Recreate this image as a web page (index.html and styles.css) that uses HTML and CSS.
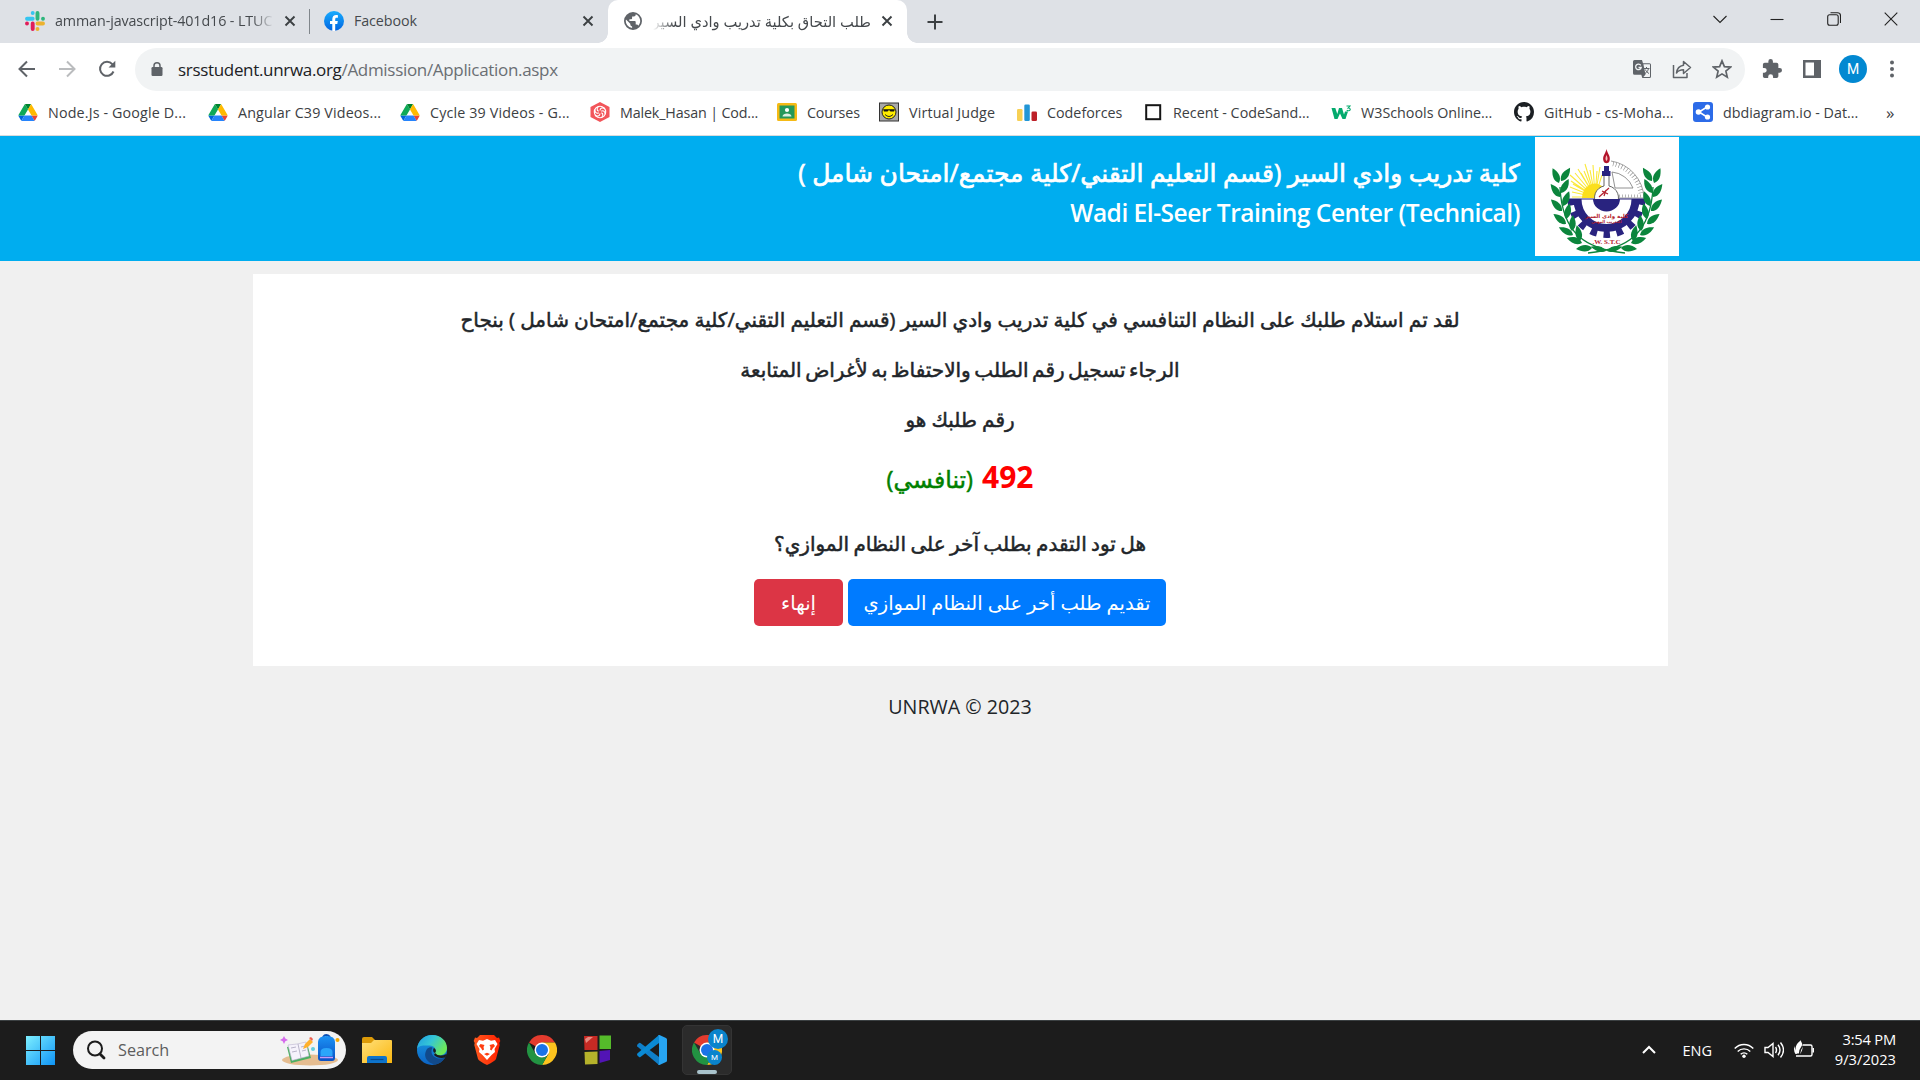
FILE: index.html
```html
<!DOCTYPE html>
<html lang="en">
<head>
<meta charset="utf-8">
<title>طلب التحاق بكلية تدريب وادي السير</title>
<link rel="stylesheet" href="styles.css">
</head>
<body>
<svg class="defs" width="0" height="0" aria-hidden="true">
  <defs>
    <linearGradient id="fb" x1="0" y1="0" x2="0" y2="1"><stop offset="0" stop-color="#18acfe"/><stop offset="1" stop-color="#0163e0"/></linearGradient>
    <linearGradient id="win" x1="0" y1="0" x2="1" y2="1"><stop offset="0" stop-color="#7defff"/><stop offset="1" stop-color="#0f94f5"/></linearGradient>
    <linearGradient id="fold" x1="0" y1="0" x2="1" y2="1"><stop offset="0" stop-color="#ffe07a"/><stop offset="1" stop-color="#fbb710"/></linearGradient>
    <linearGradient id="edgeTop" x1="0" y1="0" x2="1" y2=".5"><stop offset="0" stop-color="#1e9be2"/><stop offset=".5" stop-color="#35c6d6"/><stop offset="1" stop-color="#6ce85a"/></linearGradient>
    <linearGradient id="edgeLow" x1="0" y1="0" x2="0" y2="1"><stop offset="0" stop-color="#1b9de2"/><stop offset="1" stop-color="#0b62c4"/></linearGradient>
    <linearGradient id="brave" x1="0" y1="0" x2="1" y2="0"><stop offset="0" stop-color="#ff5a1f"/><stop offset="1" stop-color="#ff2000"/></linearGradient>
    <linearGradient id="bag" x1="0" y1="0" x2="0" y2="1"><stop offset="0" stop-color="#1b93f5"/><stop offset="1" stop-color="#0a4fc4"/></linearGradient>
    <symbol id="drive" viewBox="0 0 87.3 78">
      <path fill="#0066da" d="m6.6 66.85 3.85 6.65c.8 1.4 1.95 2.5 3.3 3.3l13.75-23.8h-27.5c0 1.55.4 3.1 1.2 4.5z"/>
      <path fill="#0fa958" d="m43.65 25-13.75-23.8c-1.35.8-2.5 1.9-3.3 3.3l-25.4 44a9.06 9.06 0 0 0-1.2 4.5h27.5z"/>
      <path fill="#ea4335" d="m73.55 76.8c1.35-.8 2.5-1.9 3.3-3.3l1.6-2.75 7.65-13.25c.8-1.4 1.2-2.95 1.2-4.5h-27.5l5.85 11.5z"/>
      <path fill="#00832d" d="m43.65 25 13.75-23.8c-1.35-.8-2.9-1.2-4.5-1.2h-18.5c-1.6 0-3.15.45-4.5 1.2z"/>
      <path fill="#2684fc" d="m59.8 53h-32.3l-13.75 23.8c1.35.8 2.9 1.2 4.5 1.2h50.8c1.6 0 3.15-.45 4.5-1.2z"/>
      <path fill="#ffba00" d="m73.4 26.5-12.7-22c-.8-1.4-1.95-2.5-3.3-3.3l-13.75 23.8 16.15 28h27.45c0-1.55-.4-3.1-1.2-4.5z"/>
    </symbol>
    <symbol id="cross" viewBox="0 0 12 12"><path d="M1.500 1.500l9 9m0-9l-9 9" fill="none" stroke="#3c4043" stroke-width="1.900"/></symbol>
    <symbol id="chrome" viewBox="0 0 48 48">
      <path fill="#e33b2e" d="M24 24L3.200 12A24 24 0 0 1 44.800 12H24z"/>
      <path fill="#fcc31e" d="M24 12h20.800A24 24 0 0 1 24 48l10.400-18z"/>
      <path fill="#229342" d="M3.200 12L13.600 30 24 36l3.600 5L24 48A24 24 0 0 1 3.200 12z"/>
      <path fill="#229342" d="M13.600 30a12 12 0 0 0 20.800 0L24 48z"/>
      <circle cx="24" cy="24" r="12" fill="#fff"/><circle cx="24" cy="24" r="9.600" fill="#1a73e8"/>
    </symbol>
    <path id="leaf" d="M0 0C-5-4-4-10-1-16 3-11 5-5 0 0z"/>
    <g id="branch" fill="#0b853c">
      <path d="M90 116C50 112 27 96 25 50" fill="none" stroke="#0b853c" stroke-width="1.300"/>
      <use href="#leaf" transform="translate(26 44) rotate(38)"/>
      <use href="#leaf" transform="translate(24 46) rotate(-20)"/>
      <use href="#leaf" transform="translate(26 56) rotate(32)"/>
      <use href="#leaf" transform="translate(25 60) rotate(-32)"/>
      <use href="#leaf" transform="translate(28 69) rotate(26)"/>
      <use href="#leaf" transform="translate(27 74) rotate(-40)"/>
      <use href="#leaf" transform="translate(31 82) rotate(16)"/>
      <use href="#leaf" transform="translate(31 87) rotate(-48)"/>
      <use href="#leaf" transform="translate(37 94) rotate(6)"/>
      <use href="#leaf" transform="translate(38 98) rotate(-58)"/>
      <use href="#leaf" transform="translate(45 104) rotate(-8)"/>
      <use href="#leaf" transform="translate(47 106) rotate(-68)"/>
      <use href="#leaf" transform="translate(57 111) rotate(-90)"/>
      <use href="#leaf" transform="translate(71 114) rotate(-72) scale(.8 1)"/>
    </g>
  </defs>
</svg>

<div class="tabs">
  <div class="tab tab-slack">
    <svg class="fav" viewBox="0 0 20 20"><g stroke-width="3.900" stroke-linecap="round"><path d="M7.700 2v0M2 7.700h5.700" stroke="#36c5f0"/><path d="M12.500 2v5.700M18 7.700v0" stroke="#2eb67d"/><path d="M12.500 12.500H18M12.500 18v0" stroke="#ecb22e"/><path d="M7.700 12.500V18M2 12.500v0" stroke="#e01e5a"/></g></svg>
    <span class="tab-title fade-right">amman-javascript-401d16 - LTUC</span>
    <svg class="x"><use href="#cross"/></svg>
  </div>
  <div class="tab tab-fb">
    <svg class="fav" viewBox="0 0 20 20"><circle cx="10" cy="10" r="10" fill="url(#fb)"/><path fill="#fff" d="M8.300 20v-7H6V10h2.300V8.200C8.300 5.600 9.800 4 12.200 4c.8 0 1.700.2 1.700.2v2.500h-1.300c-1.100 0-1.400.7-1.400 1.400V10h2.600l-.5 3h-2.100v7z"/></svg>
    <span class="tab-title">Facebook</span>
    <svg class="x"><use href="#cross"/></svg>
  </div>
  <div class="tab tab-active">
    <svg class="globe" viewBox="2 2 20 20"><path fill="#5f6368" d="M12 2a10 10 0 1 0 0 20 10 10 0 0 0 0-20zm-1 17.900A8 8 0 0 1 4.200 10.200L9 15v1a2 2 0 0 0 2 2zm6.900-2.500A2 2 0 0 0 16 16h-1v-3a1 1 0 0 0-1-1H8v-2h2a1 1 0 0 0 1-1V7h2a2 2 0 0 0 2-2v-.4a8 8 0 0 1 2.900 12.800z"/></svg>
    <span class="tab-title fade-left" dir="rtl">طلب التحاق بكلية تدريب وادي السير</span>
    <svg class="x"><use href="#cross"/></svg>
  </div>
  <svg class="plus" viewBox="0 0 16 16"><path d="M8 .5v15M.5 8h15" stroke="#3c4043" stroke-width="2"/></svg>
  <div class="winctl">
    <svg viewBox="0 0 14 14"><path d="M.5 4l6.500 6.500L13.500 4"/></svg>
    <svg viewBox="0 0 14 14"><path d="M.5 7.500h13"/></svg>
    <svg viewBox="0 0 14 14"><rect x=".7" y="2.700" width="10.500" height="10.500" rx="2"/><path d="M3.500.7h7a3 3 0 0 1 3 3v7.300"/></svg>
    <svg viewBox="0 0 14 14"><path d="M.7.700l12.600 12.600m0-12.600L.7 13.300"/></svg>
  </div>
</div>

<div class="toolbar">
  <div class="nav">
    <svg viewBox="0 0 20 20"><path d="M18 10H3M10 2.500L2.500 10l7.500 7.500" stroke="#5f6368"/></svg>
    <svg viewBox="0 0 20 20"><path d="M2 10h15M10 2.500l7.500 7.500-7.500 7.500" stroke="#babcbe"/></svg>
    <svg viewBox="0 0 20 20"><path d="M16.500 12.500A7 7 0 1 1 15.300 5.200L17 7" stroke="#5f6368"/><path d="M18.300 1.800v6.700h-6.700z" fill="#5f6368"/></svg>
  </div>
  <div class="omnibox">
    <svg class="lock" viewBox="0 0 12 14"><rect x=".5" y="5" width="11" height="9" rx="1.200" fill="#5f6368"/><path d="M3 6V3.800a3 3 0 0 1 6 0V6" fill="none" stroke="#5f6368" stroke-width="1.500"/></svg>
    <span class="url">srsstudent.unrwa.org<span class="path">/Admission/Application.aspx</span></span>
    <div class="omni-icons">
      <svg viewBox="0 0 20 20"><path fill="#5f6368" d="M2.500 1H10l1 3.200h6.500A1.500 1.500 0 0 1 19 5.700v11.800a1.500 1.500 0 0 1-1.500 1.500H10.300l-1-3.200H2.500A1.500 1.500 0 0 1 1 14.300V2.500A1.500 1.500 0 0 1 2.500 1z"/><path fill="#f1f3f4" d="M11.400 5.200h6.200l.4.400v11.900l-.4.500h-6.200l2.100-2.500z"/><path d="M8.800 6.300A2.800 2.800 0 1 0 9.200 8.500H6.500" fill="none" stroke="#f1f3f4" stroke-width="1.300"/><path d="M11.800 9.500h5.700M14.500 8v1.500M16.500 9.500c-.5 2.500-2 4-3.500 5M13.300 10.500c.8 1.800 2.200 3.200 3.700 4" fill="none" stroke="#5f6368" stroke-width="1"/></svg>
      <svg viewBox="0 0 20 20"><path d="M1.500 6v12.500H15V14M11.500 2.500l7 6-7 6v-3.700c-3.500 0-5.500 1-7 3.200.5-4 2.500-7 7-7.700z" fill="none" stroke="#5f6368" stroke-width="1.500" stroke-linejoin="round"/></svg>
      <svg viewBox="0 0 20 20"><path d="M10 1.800l2.400 5.800 6.200.5-4.700 4 1.400 6.100-5.300-3.300-5.300 3.300 1.400-6.100-4.700-4 6.200-.5z" fill="none" stroke="#5f6368" stroke-width="1.700"/></svg>
    </div>
  </div>
  <div class="actions">
    <svg viewBox="1 1 22 22"><path fill="#5f6368" d="M20.500 11H19V7a2 2 0 0 0-2-2h-4V3.500a2.500 2.500 0 0 0-5 0V5H4a2 2 0 0 0-2 2v3.800h1.500a2.700 2.700 0 0 1 0 5.400H2V20a2 2 0 0 0 2 2h3.800v-1.500a2.700 2.700 0 0 1 5.400 0V22H17a2 2 0 0 0 2-2v-4h1.500a2.500 2.500 0 0 0 0-5z"/></svg>
    <svg viewBox="0 0 20 20"><path fill="#5f6368" fill-rule="evenodd" d="M1 1h18v18H1zM3.500 3.500v13H12v-13z"/></svg>
    <span class="avatar">M</span>
    <svg viewBox="0 0 20 20"><g fill="#5f6368"><circle cx="10" cy="3.500" r="2"/><circle cx="10" cy="10" r="2"/><circle cx="10" cy="16.500" r="2"/></g></svg>
  </div>
</div>

<div class="bookmarks">
  <div class="bm wide"><svg class="dr"><use href="#drive"/></svg><span>Node.Js - Google D...</span></div>
  <div class="bm wide"><svg class="dr"><use href="#drive"/></svg><span>Angular C39 Videos...</span></div>
  <div class="bm wide"><svg class="dr"><use href="#drive"/></svg><span>Cycle 39 Videos - G...</span></div>
  <div class="bm tight"><svg viewBox="0 0 20 20"><path d="M10 0l9.500 5v10L10 20 .5 15V5z" fill="#f2555a"/><g fill="none" stroke="#fff" stroke-width="1.100"><circle cx="10" cy="10" r="5.700"/><path d="M10 8.500c0-2.500 3-3.500 5-1.500M11.300 9.300c2-1.500 4.300.6 3.700 3.200M11.300 10.800c2.300.8 2 4-.5 5M10 11.500c0 2.500-3 3.500-5 1.500M8.700 10.700c-2 1.500-4.300-.6-3.700-3.200M8.700 9.200c-2.300-.8-2-4 .5-5"/></g></svg><span>Malek_Hasan | Cod...</span></div>
  <div class="bm tight"><svg viewBox="0 0 20 20"><rect y="1" width="20" height="18" rx="1.500" fill="#f5ba15"/><rect x="2.500" y="3.500" width="15" height="13" fill="#23985a"/><circle cx="10" cy="8" r="2.100" fill="#fff"/><path d="M5.500 14.500c0-4 9-4 9 0z" fill="#d9f0e2"/></svg><span>Courses</span></div>
  <div class="bm wide"><svg viewBox="0 0 20 20"><rect x=".5" y="1" width="19" height="18" fill="#a9a9a9" stroke="#333"/><circle cx="10" cy="10" r="7" fill="#ffed00" stroke="#222"/><path d="M4 7.200h12l-1 2.300h-3.500L10 8 8.500 9.500H5z" fill="#111"/><path d="M6 12.500q4 4 8 0" fill="none" stroke="#222"/></svg><span>Virtual Judge</span></div>
  <div class="bm"><svg viewBox="0 0 20 20"><rect y="7" width="5.500" height="12" rx="1.300" fill="#f7d054"/><rect x="7.300" y="2.500" width="5.500" height="16.500" rx="1.300" fill="#2196d6"/><rect x="14.500" y="9.500" width="5.500" height="9.500" rx="1.300" fill="#bd2028"/></svg><span>Codeforces</span></div>
  <div class="bm"><svg viewBox="0 0 20 20"><rect x="3.200" y="3.200" width="14" height="14" fill="#fff" stroke="#151515" stroke-width="2"/></svg><span>Recent - CodeSand...</span></div>
  <div class="bm"><svg viewBox="0 0 20 20"><path d="M.5 6h3.800L6.300 12 8 6h3l2 6.500L14 9.500h3L14.500 17h-3L9 11.500 6.500 17h-3z" fill="#04aa6d"/><path d="M15.500 4h3.500l-1.800 2c1.200-.2 2.200.5 2 1.600-.2 1.200-2 1.500-3.500.7" fill="none" stroke="#04aa6d" stroke-width="1.100"/></svg><span>W3Schools Online...</span></div>
  <div class="bm wide"><svg viewBox="0 0 16 16"><path fill="#1b1f23" d="M8 0C3.580 0 0 3.580 0 8c0 3.540 2.290 6.530 5.470 7.590.4.070.55-.17.55-.38 0-.19-.01-.82-.01-1.490-2.010.37-2.530-.49-2.690-.94-.09-.23-.48-.94-.82-1.130-.28-.15-.68-.52-.01-.53.63-.01 1.080.58 1.230.82.720 1.210 1.870.87 2.330.66.070-.52.280-.87.510-1.070-1.780-.2-3.640-.89-3.640-3.950 0-.87.310-1.590.82-2.150-.08-.2-.36-1.020.08-2.120 0 0 .67-.21 2.200.82.640-.18 1.320-.27 2-.27s1.360.09 2 .27c1.530-1.040 2.200-.82 2.200-.82.440 1.100.160 1.920.080 2.120.51.56.82 1.270.82 2.150 0 3.070-1.870 3.750-3.650 3.950.29.25.54.73.54 1.480 0 1.070-.01 1.930-.01 2.200 0 .21.150.46.55.38A8.010 8.010 0 0 0 16 8c0-4.420-3.580-8-8-8z"/></svg><span>GitHub - cs-Moha...</span></div>
  <div class="bm"><svg viewBox="0 0 20 20"><rect width="20" height="20" rx="3" fill="#2c6be8"/><path d="M14 5L6 10l8 5" fill="none" stroke="#fff" stroke-width="1.500"/><g fill="#fff"><circle cx="14.500" cy="5" r="2.600"/><circle cx="5.500" cy="10" r="2.800"/><circle cx="14.500" cy="15" r="2.600"/></g></svg><span>dbdiagram.io - Dat...</span></div>
  <div class="more">»</div>
</div>

<div class="page" dir="rtl">
  <header class="site-head">
    <svg class="emblem" viewBox="0 0 144 119">
      <rect width="144" height="119" fill="#fff"/>
      <g stroke="#fbe93a" stroke-width="1.100"><path d="M60 60L37 60M60 60L37 55M60 60L35 50M60 60L36 44M60 60L35 38M60 60L40 36M60 60L43 32M60 60L49 34M60 60L50 27M60 60L55 33M60 60L58 28M60 60L62 34M60 60L65 30M60 60L67 38M60 60L38 47M60 60L46 36"/></g>
      <path d="M47 61a13 15 0 0 1 20-12v12z" fill="#fbdf1c"/>
      <path d="M76 24a39 39 0 0 1 33 37H84" fill="#fff" stroke="#888" stroke-width=".8"/>
      <path d="M78 27a35 35 0 0 1 28 31" fill="none" stroke="#888" stroke-width="4.500" stroke-dasharray=".6 2.400"/>
      <path d="M77 35a25 25 0 0 1 21 16H80z" fill="none" stroke="#777" stroke-width=".8"/>
      <path d="M84 59h23" stroke="#888" stroke-width="3" stroke-dasharray=".6 2.400"/>
      <g transform="translate(71.500 62)">
        <path d="M-29 0A29 29 0 0 0 29 0" fill="none" stroke="#29237f" stroke-width="8"/>
        <path d="M-35.500 0A35.500 35.500 0 0 0 35.500 0" fill="none" stroke="#29237f" stroke-width="7" stroke-dasharray="6.500 6.670"/>
        <path d="M-39 0h79" stroke="#29237f" stroke-width="1"/>
      </g>
      <path d="M69 35h5v14a12 12 0 1 1-5 0z" fill="#fff" stroke="#555" stroke-width=".9"/>
      <rect x="67" y="34" width="8.500" height="5" fill="#29237f"/><path d="M71.500 29v6" stroke="#29237f" stroke-width="5"/>
      <path d="M71.500 12c1 5 4.500 7 3 12-1 3-5 3-6 0-1.500-5 2-7 3-12z" fill="#b3142b"/><path d="M71.500 18q2 4 0 6-2-2 0-6z" fill="#f6c2c2"/>
      <path d="M64 60l10-9M67 54l6 3M69 59l2-6" stroke="#b2202d" stroke-width="1.200"/>
      <path d="M58 62h27a13.500 12.500 0 0 1-27 0z" fill="#29237f"/>
      <text class="em-ar" x="71.500" y="80.500" text-anchor="middle">كلية وادي السير</text>
      <text class="em-ar small" x="71.500" y="85.500" text-anchor="middle">للتدريب المهني</text>
      <use href="#branch"/><use href="#branch" transform="translate(143 0) scale(-1 1)"/>
      <text class="em-en" x="71.500" y="107" text-anchor="middle">W. S.T.C.</text>
    </svg>
    <div class="head-text">
      <h1 class="ar">كلية تدريب وادي السير (قسم التعليم التقني/كلية مجتمع/امتحان شامل )</h1>
      <h1 class="en" dir="ltr">Wadi El-Seer Training Center (Technical)</h1>
    </div>
  </header>
  <main class="card">
    <p>لقد تم استلام طلبك على النظام التنافسي في كلية تدريب وادي السير (قسم التعليم التقني/كلية مجتمع/امتحان شامل ) بنجاح</p>
    <p class="note">الرجاء تسجيل رقم الطلب والاحتفاظ به لأغراض المتابعة</p>
    <p>رقم طلبك هو</p>
    <p class="result"><span class="num">492</span><span class="kind">(تنافسي)</span></p>
    <p class="ask">هل تود التقدم بطلب آخر على النظام الموازي؟</p>
    <div class="buttons">
      <button class="btn primary">تقديم طلب أخر على النظام الموازي</button>
      <button class="btn danger">إنهاء</button>
    </div>
  </main>
  <footer dir="ltr">UNRWA © 2023</footer>
</div>

<div class="taskbar">
  <svg class="start" viewBox="0 0 29 29"><path fill="url(#win)" d="M0 0h14v14H0zM15 0h14v14H15zM0 15h14v14H0zM15 15h14v14H15z"/></svg>
  <div class="search">
    <svg class="mag" viewBox="0 0 20 20"><circle cx="9" cy="8.500" r="7" fill="none" stroke="#1c1c1c" stroke-width="2"/><path d="M14 14l4 4" stroke="#1c1c1c" stroke-width="2.800" stroke-linecap="round"/></svg>
    <span>Search</span>
    <svg class="decor" viewBox="0 0 60 34">
      <ellipse cx="30" cy="27" rx="28" ry="5.500" fill="#e5bd91"/>
      <path d="M4 3l1.300 2.500L8 7 5.300 8.300 4 11 2.700 8.300 0 7l2.700-1.500z" fill="#d56bec"/>
      <path d="M7 14l20-4 4 15-20 5z" fill="#4caf62"/><path d="M8 12l9-1 9-2 3 14-17 4.500z" fill="#f5f2fb" stroke="#bbb3cf" stroke-width=".6"/><path d="M18 11l3 14M11 15l5-1M12 19l5-1M21 14l4-1M22 18l4-1" stroke="#aaa5bd" stroke-width=".8"/>
      <path d="M23 16l2-5 5-5 3 3-5 5z" fill="#ffb12e"/><path d="M29 5l3 3 1-2-2-2z" fill="#f05e50"/>
      <circle cx="33" cy="16" r="2" fill="#63cfe0"/><circle cx="57.500" cy="7" r="2" fill="#f5a800"/>
      <path d="M43 4q3-4 7 0" fill="none" stroke="#0a4fb4" stroke-width="2"/><path d="M38 9q0-6 8.500-6T55 9v16q0 3-3 3H41q-3 0-3-3z" fill="url(#bag)"/><path d="M40.500 23v-4q0-4 6-4t6 4v4z" fill="#2ba5fa"/><path d="M40 24.500h13" stroke="#c79af5" stroke-width="1.500"/>
    </svg>
  </div>
  <div class="apps">
    <svg viewBox="0 0 30 30"><path d="M0 4q0-2 2-2h8l3 3v6H0z" fill="#dc9a08"/><path d="M0 8h9l3-3h17q1 0 1 1v22H0z" fill="url(#fold)"/><path d="M5 28v-5q0-2 2-2h16q2 0 2 2v5z" fill="#0e74cc"/><path d="M8.500 24.500h13" stroke="#084a8c" stroke-width="1.200"/></svg>
    <svg viewBox="0 0 30 30"><circle cx="15" cy="15" r="15" fill="url(#edgeLow)"/><path d="M0 14C1 5 8 0 15 0c9 0 15 6 15 13 0 5-4 7.500-8 7.500-3 0-5-1.200-4.500-2.500 3-3 0-7.500-5-7.500C7 10.500 2 10 0 14z" fill="url(#edgeTop)"/><path d="M10 14C5 22 11 28 18 29.700 23 29 27 25 28.500 22 22 26 14 22 14.500 16c0-2 1-2.500 1-3.500-2-.5-4 0-5.500 1.500z" fill="#114a8b"/><path d="M18 18c-2.500-1-2-4-1-5 2 1 2.500 3.300 1 5z" fill="#1c1c1c"/><path d="M18 18q4 4.500 11.500 1l-1 3.500Q21 24 17 20z" fill="#1c1c1c"/></svg>
    <svg viewBox="0 0 30 30"><path d="M8 0h14l3 3 2-.5 1.300 3.500-1 2 .4 2-3.700 14q-1 2-9 6-8-4-9-6L2.300 10l.4-2-1-2L3 2.500 5 3z" fill="url(#brave)"/><path fill="#fff" d="M7 5l4 .7L15 4l4 1.700L23 5l2.500 4-3 5 .5 3-3.500 3-4.500 5-4.500-5L7 17l.5-3-3-5z"/><path fill="#ff3d10" d="M8.500 9l4 1-1 2 .5 2.500-1.500 1L9 13l-2-2zM21.500 9l-4 1 1 2-.5 2.500 1.500 1L21 13l2-2zM12 19l3-1.300 3 1.300-3 1.700z"/></svg>
    <svg><use href="#chrome"/></svg>
    <svg viewBox="0 0 30 30"><path d="M2 1l13.500 0v14L2.500 15z" fill="#c72a24"/><path d="M17.500.5H29V14H17.500z" fill="#55bb2a"/><path d="M2.500 17l13-.5V29L3 29.500z" fill="#b5b22b"/><path d="M17.500 16L28 15v10l-10.500 3z" fill="#5214b5"/><path d="M3 4l3-2h5l-7 6z" fill="#f5b3a8" opacity=".7"/></svg>
    <svg viewBox="0 0 30 30"><path d="M0 10l2-2q.7-.5 1.400 0L22 22v8L.3 11.500z" fill="#0f7fc9"/><path d="M0 20l2 2q.7.500 1.400 0L22 8V0L.3 18.500z" fill="#0a8ad4"/><path d="M21 0q1-.3 2 .2l6 2.800q1 .5 1 1.500v21q0 1-1 1.500l-6 2.800q-1 .5-2 .2 1-.5 1-2V2q0-1.500-1-2z" fill="#27a5f2"/></svg>
    <div class="running">
      <svg viewBox="0 0 48 48"><use href="#chrome"/></svg>
      <span class="badge big">M</span><span class="badge">M</span>
    </div>
  </div>
  <div class="tray">
    <svg class="up" viewBox="0 0 14 10"><path d="M1 8l6-6 6 6"/></svg>
    <span class="lang">ENG</span>
    <svg viewBox="0 0 20 20"><path d="M.7 8.500a12.800 12.800 0 0 1 18.600 0M3.700 11.500a8.800 8.800 0 0 1 12.600 0M6.700 14.300a4.800 4.800 0 0 1 6.600 0"/><circle cx="10" cy="16.200" r="1.700" class="fill"/></svg>
    <svg viewBox="0 0 20 20"><path d="M1 7.500h3L9 3.500v13l-5-4H1zM11.500 7q2 3 0 6M14 4.800q4 5.200 0 10.400M16.500 2.500q6 7.500 0 15"/></svg>
    <svg viewBox="0 0 20 20"><path d="M9 5h7.500q1.500 0 1.500 1.500v8q0 1.500-1.500 1.500H2"/><path class="fill" d="M18.500 8h1.500v4.500h-1.500zM6 0C9.500 4 9.500 9 6.500 13.500H3C0 9 2 4 6 1zM0 6l3 8H1.500Q0 12 0 9z"/><path d="M5.500 14q0-4 3-8" stroke="#1c1c1c"/></svg>
    <div class="clock"><span class="time">3:54 PM</span><span>9/3/2023</span></div>
  </div>
</div>
</body>
</html>
```
FILE: styles.css
```css
* { box-sizing: border-box; }
body { margin: 0; width: 1920px; height: 1080px; overflow: hidden; display: flex; flex-direction: column; background: #fff; font-family: "Open Sans", "DejaVu Sans", sans-serif; }
svg { display: block; flex: none; }
.defs { position: absolute; }

.tabs { height: 43px; flex: none; display: flex; background: #dee1e6; align-items: center; }
.tab { display: flex; align-items: center; height: 43px; padding-bottom: 1px; font-size: 14.3px; letter-spacing: -.1px; color: #45494d; }
.tab-slack { width: 310px; padding-left: 25px; }
.tab-slack::after { content: ""; width: 1px; height: 25px; background: #80868b; margin-left: auto; }
.tab-fb { width: 298px; padding-left: 14px; }
.tab-active { width: 299px; background: #fff; border-radius: 10px 10px 0 0; padding-left: 16px; position: relative; letter-spacing: 0; }
.tab-active::before, .tab-active::after { content: ""; position: absolute; bottom: 0; width: 10px; height: 10px; }
.tab-active::before { left: -10px; background: radial-gradient(circle at 0 0, transparent 9.5px, #fff 10px); }
.tab-active::after { right: -10px; background: radial-gradient(circle at 100% 0, transparent 9.5px, #fff 10px); }
.fav { width: 20px; height: 20px; margin-right: 10px; }
.globe { width: 18px; height: 18px; margin-right: 11px; }
.tab-title { width: 219px; overflow: hidden; white-space: nowrap; padding-bottom: 1px; }
.tab-fb .tab-title { width: 218px; }
.tab-active .tab-title { width: 218px; font-size: 14.7px; }
.fade-right { -webkit-mask-image: linear-gradient(to right, #000 90%, transparent); }
.fade-left { -webkit-mask-image: linear-gradient(to left, #000 90%, transparent); }
.x { width: 12px; height: 12px; margin-left: 10px; }
.plus { width: 16px; height: 16px; margin-left: 20px; }
.winctl { display: flex; gap: 43px; margin: -6px 22px 0 auto; }
.winctl svg { width: 14px; height: 14px; fill: none; stroke: #222; stroke-width: 1.1; }

.toolbar { height: 52px; flex: none; display: flex; align-items: center; padding: 0 0 0 17px; }
.nav { display: flex; gap: 20px; }
.nav svg { width: 20px; height: 20px; fill: none; stroke-width: 2; }
.omnibox { margin: 0 0 0 18px; width: 1610px; flex: none; height: 43px; border-radius: 22px; background: #f1f3f4; display: flex; align-items: center; padding: 0 13px 0 16px; }
.lock { width: 12px; height: 14px; }
.url { margin-left: 15px; font-size: 17px; letter-spacing: -.32px; color: #202124; }
.path { color: #6a6e73; }
.omni-icons { margin-left: auto; display: flex; align-items: center; gap: 20px; }
.omni-icons svg { width: 20px; height: 20px; }
.actions { display: flex; align-items: center; margin-left: 17px; }
.actions svg { width: 20px; height: 20px; }
.actions svg + svg { margin-left: 20px; }
.avatar { width: 28px; height: 28px; border-radius: 50%; background: #0288d1; color: #fff; font: 14px/28px Roboto, sans-serif; text-align: center; margin-left: 17px; }
.actions .avatar + svg { margin-left: 15px; }

.bookmarks { height: 41px; flex: none; display: grid; grid-template-columns: 190px 192px 190px 187px 102px 138px 126px 188px 183px 179px 193px auto; padding: 0 0 6px 18px; align-items: center; font-size: 14.3px; color: #3c4043; border-bottom: 1px solid #d9dbdd; white-space: nowrap; }
.bm { display: flex; align-items: center; gap: 10px; }
.bm.wide { letter-spacing: .15px; }
.bm.tight { letter-spacing: -.15px; }
.bm svg { width: 20px; height: 20px; }
.bm .dr { height: 17px; }
.more { font-size: 17px; }

.page { flex: 1; background: #f0f0f0; display: flex; flex-direction: column; align-items: center; color: #212529; }
.site-head { width: 100%; height: 125px; background: #00adef; color: #fff; display: flex; padding: 1px 241px 0 0; }
.emblem { width: 144px; height: 119px; }
.em-ar { font: bold 5.5px "DejaVu Sans", sans-serif; fill: #b2202d; }
.em-ar.small { font-size: 4px; }
.em-en { font: bold 7px "Liberation Serif", serif; fill: #b2202d; }
.head-text { padding: 16px 15px 0 0; }
h1 { margin: 0; font-size: 25px; line-height: 40px; text-align: right; height: 40px; white-space: nowrap; }
h1.ar { font-weight: 400; line-height: 38px; -webkit-text-stroke: .7px #fff; }
h1.en { font-weight: 600; font-size: 24.5px; letter-spacing: -.48px; }
.card { width: 1415px; height: 392px; margin-top: 13px; background: #fff; padding: 31px 0 0; }
.card p { margin: 0 0 20px; height: 30px; line-height: 29px; font-size: 20px; display: flex; justify-content: center; white-space: nowrap; -webkit-text-stroke: .5px; }
.card .note { word-spacing: -1.7px; }
.card .result { height: 42px; line-height: 46px; font-size: 23.5px; gap: 9px; margin-bottom: 31px; align-items: baseline; }
.card .num { color: #f00; font-size: 30px; line-height: 44px; font-weight: 700; -webkit-text-stroke: 0; }
.kind { color: #008000; }
.card .ask { margin-bottom: 21px; line-height: 32px; word-spacing: -.8px; }
.buttons { display: flex; justify-content: center; gap: 5px; }
.btn { height: 47px; border: 0; border-radius: 5px; color: #fff; font: 19.5px "Open Sans", "DejaVu Sans", sans-serif; padding: 0; display: flex; align-items: center; justify-content: center; white-space: nowrap; }
.primary { width: 318px; background: #007bff; }
.danger { width: 89px; background: #dc3545; }
footer { margin-top: 26px; font-size: 19.7px; line-height: 30px; }

.taskbar { height: 60px; flex: none; background: #1c1c1c; border-top: 1px solid #3b4042; display: flex; align-items: center; color: #fff; padding: 0 24px 1px 26px; }
.start { width: 29px; height: 29px; }
.search { width: 273px; height: 38px; border-radius: 19px; background: #f3f3f3; margin-left: 18px; display: flex; align-items: center; padding: 0 6px 0 13px; color: #5c5c5c; font-size: 16.2px; }
.mag { width: 20px; height: 20px; margin-right: 12px; }
.decor { width: 60px; height: 34px; margin-left: auto; }
.apps { display: flex; align-items: center; gap: 25px; margin-left: 16px; }
.apps svg { width: 30px; height: 30px; }
.running { width: 50px; height: 50px; margin-left: -10px; border-radius: 5px; background: #2b2b2b; border: 1px solid #343434; position: relative; padding: 9px; }
.running::after { content: ""; position: absolute; left: 14px; bottom: 0; width: 20px; height: 4px; border-radius: 2px; background: #a9c3cc; }
.badge { position: absolute; width: 15px; height: 15px; border-radius: 50%; background: #0a84cc; font: 8px/15px Roboto, sans-serif; text-align: center; left: 24px; top: 24px; }
.badge.big { width: 20px; height: 20px; font: 12px/20px Roboto, sans-serif; left: 25px; top: 3px; }
.tray { margin-left: auto; display: flex; align-items: center; }
.tray svg { width: 20px; height: 20px; margin-right: 10px; fill: none; stroke: #fff; stroke-width: 1.4; }
.tray .fill { fill: #fff; stroke: none; }
.tray .up { width: 14px; height: 10px; margin-right: 26px; stroke-width: 2; }
.lang { font-size: 14.5px; margin-right: 22px; }
.clock { width: 72px; display: flex; flex-direction: column; align-items: flex-end; font-size: 14.7px; line-height: 20px; margin-top: -3px; }
.time { letter-spacing: -.2px; }
```
